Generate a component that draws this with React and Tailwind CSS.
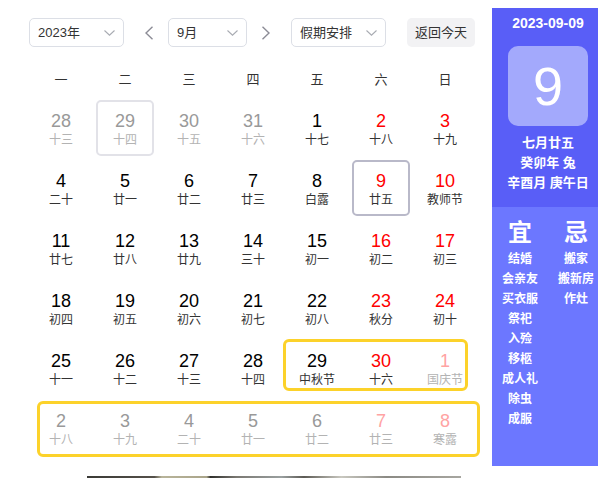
import React from "react";

const FONT = { fontFamily: '"Liberation Sans", "Noto Sans CJK SC", sans-serif' };

const WEEK = ["一", "二", "三", "四", "五", "六", "日"];

// kind: "in" current month, "out" adjacent month; red marks weekends
const DAYS = [
  [28, "十三", "out", false], [29, "十四", "out", false, "today"], [30, "十五", "out", false], [31, "十六", "out", false],
  [1, "十七", "in", false], [2, "十八", "in", true], [3, "十九", "in", true],
  [4, "二十", "in", false], [5, "廿一", "in", false], [6, "廿二", "in", false], [7, "廿三", "in", false],
  [8, "白露", "in", false], [9, "廿五", "in", true, "selected"], [10, "教师节", "in", true],
  [11, "廿七", "in", false], [12, "廿八", "in", false], [13, "廿九", "in", false], [14, "三十", "in", false],
  [15, "初一", "in", false], [16, "初二", "in", true], [17, "初三", "in", true],
  [18, "初四", "in", false], [19, "初五", "in", false], [20, "初六", "in", false], [21, "初七", "in", false],
  [22, "初八", "in", false], [23, "秋分", "in", true], [24, "初十", "in", true],
  [25, "十一", "in", false], [26, "十二", "in", false], [27, "十三", "in", false], [28, "十四", "in", false],
  [29, "中秋节", "in", false], [30, "十六", "in", true], [1, "国庆节", "out", true],
  [2, "十八", "out", false], [3, "十九", "out", false], [4, "二十", "out", false], [5, "廿一", "out", false],
  [6, "廿二", "out", false], [7, "廿三", "out", true], [8, "寒露", "out", true],
];

const YI = ["结婚", "会亲友", "买衣服", "祭祀", "入殓", "移柩", "成人礼", "除虫", "成服"];
const JI = ["搬家", "搬新房", "作灶"];

function Caret() {
  return (
    <svg width="11" height="6" viewBox="0 0 11 6" fill="none">
      <polyline points="0.5,0.5 5.5,5.2 10.5,0.5" stroke="#a8abb2" strokeWidth="1.1" />
    </svg>
  );
}

function Arrow({ dir }) {
  const pts = dir === "left" ? "7.5,0.8 1,7 7.5,13.2" : "0.5,0.8 7,7 0.5,13.2";
  return (
    <svg width="8" height="14" viewBox="0 0 8 14" fill="none">
      <polyline points={pts} stroke="#8c8c96" strokeWidth="1.4" />
    </svg>
  );
}

function Select({ label, width, caretLeft }) {
  return (
    <div
      className={`relative h-[29px] rounded-[5px] border border-[#dcdfe6] bg-white flex items-center pl-[8px] text-[13px] text-[#333] ${width}`}
    >
      <span>{label}</span>
      <span className={`absolute top-[11px] ${caretLeft}`}>
        <Caret />
      </span>
    </div>
  );
}

function DayCell({ n, lunar, kind, red, mark }) {
  let numColor = "text-black";
  let lunarColor = "text-[#333]";
  if (kind === "out") {
    numColor = red ? "text-[#ffa3a3]" : "text-[#999]";
    lunarColor = "text-[#b3b3b3]";
  } else if (red) {
    numColor = "text-[#ff0000]";
  }
  let box = "border-2 border-transparent";
  if (mark === "today") box = "border-2 border-[#e2e2e8]";
  if (mark === "selected") box = "border-2 border-[#b9b9c9]";
  return (
    <div className="h-[60px] px-[3px] py-[2px]">
      <div className={`h-[56px] rounded-[5px] ${box} flex flex-col items-center pt-[9px]`}>
        <div className={`text-[18px] leading-[20px] ${numColor}`}>{n}</div>
        <div className={`text-[12px] leading-[16px] mt-[1px] ${lunarColor}`}>{lunar}</div>
      </div>
    </div>
  );
}

export default function App() {
  return (
    <div className="w-[606px] h-[478px] overflow-hidden bg-white" style={FONT}>
      <div className="flex h-[466px]">
        {/* calendar pane */}
        <div className="relative w-[492px] pl-[29px]">
          <div className="flex items-center mt-[18px] h-[29px]">
            <Select label="2023年" width="w-[95px]" caretLeft="left-[74px]" />
            <div className="ml-[21px] mr-[15px] flex items-center">
              <Arrow dir="left" />
            </div>
            <Select label="9月" width="w-[79px]" caretLeft="left-[58px]" />
            <div className="ml-[15px] mr-[21px] flex items-center">
              <Arrow dir="right" />
            </div>
            <Select label="假期安排" width="w-[95px]" caretLeft="left-[74px]" />
            <button className="ml-[21px] h-[29px] w-[68px] rounded-[5px] bg-[#f2f2f4] text-[13px] text-[#333] flex items-center justify-center">
              返回今天
            </button>
          </div>

          <div className="grid grid-cols-7 w-[448px] mt-[23px] h-[20px] text-[13px] leading-[20px] text-[#333]">
            {WEEK.map((w) => (
              <div key={w} className="text-center">{w}</div>
            ))}
          </div>

          <div className="grid grid-cols-7 w-[448px] mt-[8px]">
            {DAYS.map(([n, lunar, kind, red, mark], i) => (
              <DayCell key={i} n={n} lunar={lunar} kind={kind} red={red} mark={mark} />
            ))}
          </div>

          {/* holiday range outlines */}
          <div className="absolute left-[283px] top-[339px] w-[185px] h-[52px] rounded-[6px] border-[3px] border-[#fcd22a] pointer-events-none" />
          <div className="absolute left-[37px] top-[401px] w-[443px] h-[56px] rounded-[6px] border-[3px] border-[#fcd22a] pointer-events-none" />
        </div>

        {/* day detail panel */}
        <div className="mt-[8px] w-[106px] h-[458px] overflow-hidden bg-[#6c77ff]">
          <div className="w-[112px] text-white">
            <div className="bg-[#595ef7] flex flex-col items-center pt-[5px] pb-[14px]">
              <div className="text-[14px] leading-[20px] font-bold">2023-09-09</div>
              <div className="mt-[13px] w-[80px] h-[80px] rounded-[10px] bg-[#a3a9fc] flex items-center justify-center">
                <span className="text-[54px] leading-none">9</span>
              </div>
              <div className="mt-[7px] text-[13px] leading-[20px] font-bold text-center">
                <div>七月廿五</div>
                <div>癸卯年 兔</div>
                <div>辛酉月 庚午日</div>
              </div>
            </div>
            <div className="flex pt-[12px]">
              <div className="w-[56px] flex flex-col items-center">
                <div className="text-[24px] leading-[28px] font-bold">宜</div>
                <div className="mt-[2px] flex flex-col items-center text-[12px] leading-[20px] font-bold">
                  {YI.map((t) => (
                    <div key={t}>{t}</div>
                  ))}
                </div>
              </div>
              <div className="w-[56px] flex flex-col items-center">
                <div className="text-[24px] leading-[28px] font-bold">忌</div>
                <div className="mt-[2px] flex flex-col items-center text-[12px] leading-[20px] font-bold">
                  {JI.map((t) => (
                    <div key={t}>{t}</div>
                  ))}
                </div>
              </div>
            </div>
          </div>
        </div>
      </div>

      {/* photo strip peeking in below */}
      <div className="mt-[10px] ml-[87px] w-[374px] h-[12px] bg-[linear-gradient(90deg,#3a3a36_0%,#55514a_18%,#b8b49a_20%,#aaa58a_32%,#2f2f2c_33%,#7a7872_40%,#9aa0a0_52%,#5c5a54_58%,#c9c8c0_68%,#8b8a84_80%,#a7a6a0_100%)]" />
    </div>
  );
}
